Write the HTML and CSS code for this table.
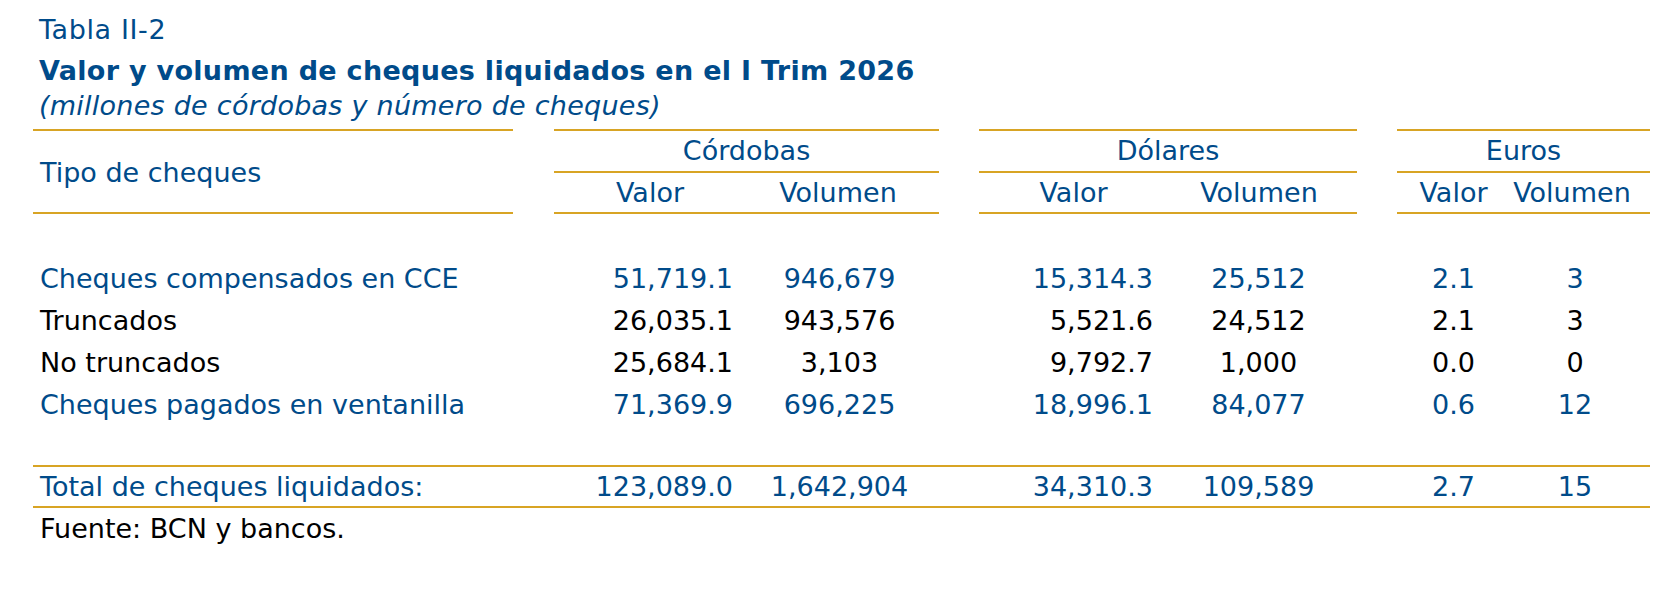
FILE: index.html
```html
<!DOCTYPE html>
<html lang="es">
<head>
<meta charset="utf-8">
<title>Tabla II-2</title>
<link rel="stylesheet" href="styles.css">
</head>
<body>
<div class="page">
  <div class="caption">
    <div class="cap-num">Tabla II-2</div>
    <div class="cap-title">Valor y volumen de cheques liquidados en el I Trim 2026</div>
    <div class="cap-sub">(millones de córdobas y número de cheques)</div>
  </div>

  <div class="table">
    <div class="grid head">
      <div class="h-label">Tipo de cheques</div>
      <div class="h-group g-c">Córdobas</div>
      <div class="h-group g-d">Dólares</div>
      <div class="h-group g-e">Euros</div>
      <div class="h-sub c1">Valor</div>
      <div class="h-sub c2 vol-c">Volumen</div>
      <div class="h-sub d1">Valor</div>
      <div class="h-sub d2 vol-d">Volumen</div>
      <div class="h-sub e1">Valor</div>
      <div class="h-sub e2 vol-e">Volumen</div>
    </div>

    <div class="body">
      <div class="grid row blue">
        <div class="label">Cheques compensados en CCE</div>
        <div class="num c1">51,719.1</div><div class="num c2">946,679</div>
        <div class="num d1">15,314.3</div><div class="num d2">25,512</div>
        <div class="num e1">2.1</div><div class="num e2">3</div>
      </div>
      <div class="grid row black">
        <div class="label">Truncados</div>
        <div class="num c1">26,035.1</div><div class="num c2">943,576</div>
        <div class="num d1">5,521.6</div><div class="num d2">24,512</div>
        <div class="num e1">2.1</div><div class="num e2">3</div>
      </div>
      <div class="grid row black">
        <div class="label">No truncados</div>
        <div class="num c1">25,684.1</div><div class="num c2">3,103</div>
        <div class="num d1">9,792.7</div><div class="num d2">1,000</div>
        <div class="num e1">0.0</div><div class="num e2">0</div>
      </div>
      <div class="grid row blue">
        <div class="label">Cheques pagados en ventanilla</div>
        <div class="num c1">71,369.9</div><div class="num c2">696,225</div>
        <div class="num d1">18,996.1</div><div class="num d2">84,077</div>
        <div class="num e1">0.6</div><div class="num e2">12</div>
      </div>
    </div>

    <div class="grid row total blue">
      <div class="label">Total de cheques liquidados:</div>
      <div class="num c1">123,089.0</div><div class="num c2">1,642,904</div>
      <div class="num d1">34,310.3</div><div class="num d2">109,589</div>
      <div class="num e1">2.7</div><div class="num e2">15</div>
    </div>

    <div class="source">Fuente: BCN y bancos.</div>
  </div>
</div>
</body>
</html>
```

FILE: styles.css
```css
html, body {
  margin: 0;
  padding: 0;
  background: #ffffff;
}

body {
  font-family: "DejaVu Sans", sans-serif;
  font-size: 27px;
  color: #000000;
}

.page {
  margin-left: 33px;
  width: 1617px;
  padding-top: 10px;
}

/* Caption */
.caption {
  padding-left: 6px;
  color: #004b8a;
}

.cap-num {
  line-height: 40px;
  letter-spacing: 0.6px;
}

.cap-title {
  font-weight: bold;
  line-height: 41px;
  letter-spacing: 0.3px;
}

.cap-sub {
  font-style: italic;
  line-height: 30px;
  letter-spacing: 0.25px;
}

/* Table */
.table {
  margin-top: 8px;
}

.grid {
  display: grid;
  grid-template-columns: 480px 41px 192px 193px 40px 189px 189px 40px 113px 140px;
}

.head {
  grid-template-rows: 44px 41px;
  color: #004b8a;
}

.head > div {
  box-sizing: border-box;
  text-align: center;
  white-space: nowrap;
}

.head > .h-label {
  grid-column: 1;
  grid-row: 1 / span 2;
  border-top: 2px solid #d8a424;
  border-bottom: 2px solid #d8a424;
  text-align: left;
  padding-left: 7px;
  padding-top: 2px;
  display: flex;
  align-items: center;
}

.h-group {
  grid-row: 1;
  border-top: 2px solid #d8a424;
  border-bottom: 2px solid #d8a424;
  line-height: 40px;
}

.g-c { grid-column: 3 / span 2; }
.g-d { grid-column: 6 / span 2; }
.g-e { grid-column: 9 / span 2; }

.h-sub {
  grid-row: 2;
  border-bottom: 2px solid #d8a424;
  line-height: 39px;
}

.c1 { grid-column: 3; }
.c2 { grid-column: 4; }
.d1 { grid-column: 6; }
.d2 { grid-column: 7; }
.e1 { grid-column: 9; }
.e2 { grid-column: 10; }

.h-sub.vol-c { padding-right: 9px; }
.h-sub.vol-d { padding-right: 7px; }
.h-sub.vol-e { padding-right: 16px; }

/* Body rows */
.body {
  padding-top: 44px;
  padding-bottom: 39px;
}

.row {
  line-height: 42px;
  white-space: nowrap;
}

.row .label {
  grid-column: 1;
  padding-left: 7px;
}

.blue { color: #004b8a; }
.black { color: #000000; }

.num.c1 { text-align: right; padding-right: 13px; }
.num.d1 { text-align: right; padding-right: 15px; }
.num.e1 { text-align: right; padding-right: 35px; }
.num.c2 { text-align: center; padding-right: 6px; }
.num.d2 { text-align: center; padding-right: 8px; }
.num.e2 { text-align: center; padding-right: 10px; }

.total {
  border-top: 2px solid #d8a424;
  border-bottom: 2px solid #d8a424;
  line-height: 39px;
}

.source {
  padding-left: 7px;
  line-height: 41px;
}
```
